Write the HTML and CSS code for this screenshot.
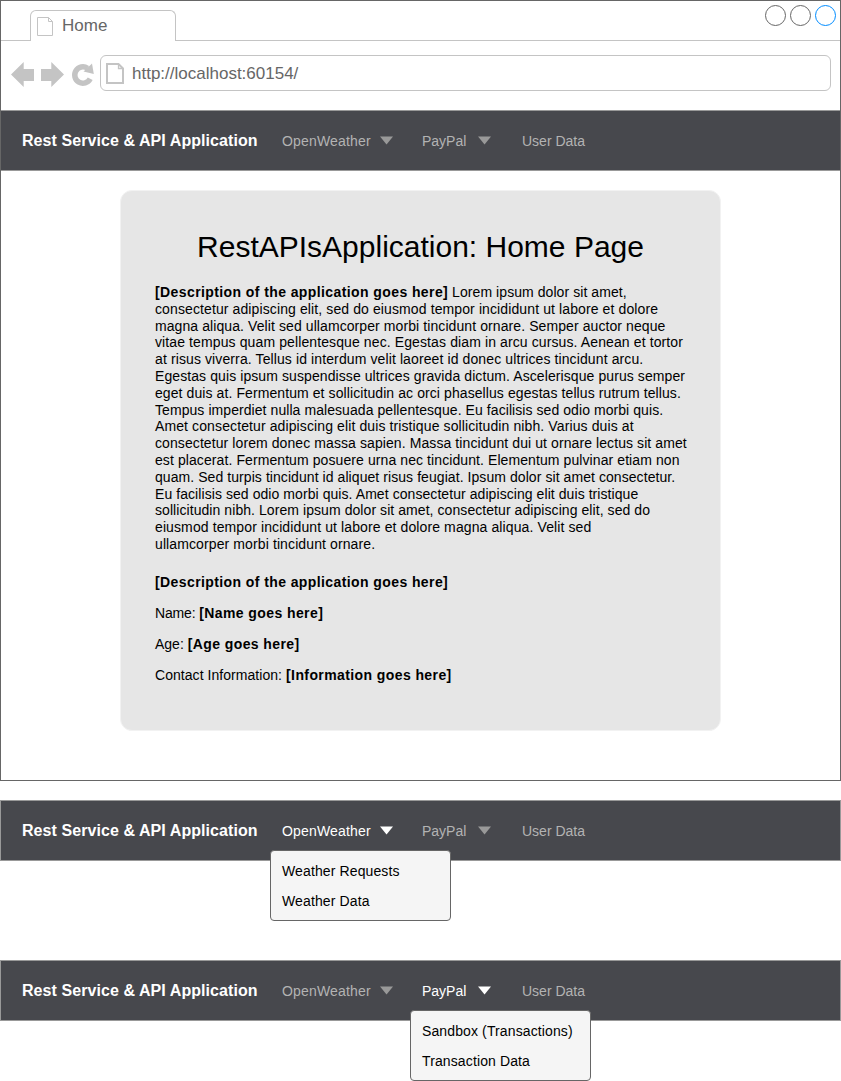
FILE: index.html
```html
<!DOCTYPE html>
<html lang="en">
<head>
<meta charset="utf-8">
<title>Home</title>
<link rel="stylesheet" href="styles.css">
</head>
<body>
<section class="browser">
  <div class="tabs">
    <div class="tabs-lead"></div>
    <div class="tab">
      <svg class="tab-icon" width="16" height="19" viewBox="0 0 16 19" fill="none" stroke="#c4c4c4"><path d="M.5.5H11.5L15.5 4.5V18.5H.5Z"/><path d="M11.5.5V4.5H15.5"/></svg>
      <span>Home</span>
    </div>
    <div class="tabs-rest">
      <i class="dot"></i><i class="dot"></i><i class="dot dot-blue"></i>
    </div>
  </div>
  <div class="toolbar">
    <svg class="controls" width="84" height="28" viewBox="0 0 84 28" fill="#c4c4c4">
      <path d="M0 13.5 12.700 1V8H23V20H12.700V26Z"/>
      <path d="M53 13.500 40.300 1V8H30V20H40.300V26Z"/>
      <path d="M76.500 7.200A8.200 8.200 0 1 0 79.200 17.800" fill="none" stroke="#c4c4c4" stroke-width="5.500"/>
      <path d="M81 2.500 82.800 13 72.500 10.500Z"/>
    </svg>
    <div class="address">
      <svg width="18" height="21" viewBox="0 0 18 21" fill="none" stroke="#c4c4c4"><path d="M1 1H12.500L17 5.500V20H1Z" stroke-width="2"/><path d="M12.500 1V5.500H17" stroke-width="1.300"/></svg>
      <span class="url">http://localhost:60154/</span>
    </div>
  </div>
  <nav class="navbar navbar-inset">
    <b class="brand">Rest Service &amp; API Application</b>
    <span class="item item-weather">OpenWeather<svg class="caret" width="13" height="9"><path d="M0 .5H13L6.500 8.500Z"/></svg></span>
    <span class="item item-paypal">PayPal<svg class="caret" width="13" height="9"><path d="M0 .5H13L6.500 8.500Z"/></svg></span>
    <span class="item">User Data</span>
  </nav>
  <main class="card">
    <h1>RestAPIsApplication: Home Page</h1>
    <p class="lorem">
      <span class="line snug"><b>[Description of the application goes here]</b> Lorem ipsum dolor sit amet,</span>
      <span class="line loose">consectetur adipiscing elit, sed do eiusmod tempor incididunt ut labore et dolore</span>
      <span class="line">magna aliqua. Velit sed ullamcorper morbi tincidunt ornare. Semper auctor neque</span>
      <span class="line loose">vitae tempus quam pellentesque nec. Egestas diam in arcu cursus. Aenean et tortor</span>
      <span class="line loose">at risus viverra. Tellus id interdum velit laoreet id donec ultrices tincidunt arcu.</span>
      <span class="line">Egestas quis ipsum suspendisse ultrices gravida dictum. Ascelerisque purus semper</span>
      <span class="line">eget duis at. Fermentum et sollicitudin ac orci phasellus egestas tellus rutrum tellus.</span>
      <span class="line snug">Tempus imperdiet nulla malesuada pellentesque. Eu facilisis sed odio morbi quis.</span>
      <span class="line loose">Amet consectetur adipiscing elit duis tristique sollicitudin nibh. Varius duis at</span>
      <span class="line">consectetur lorem donec massa sapien. Massa tincidunt dui ut ornare lectus sit amet</span>
      <span class="line">est placerat. Fermentum posuere urna nec tincidunt. Elementum pulvinar etiam non</span>
      <span class="line snug">quam. Sed turpis tincidunt id aliquet risus feugiat. Ipsum dolor sit amet consectetur.</span>
      <span class="line snug">Eu facilisis sed odio morbi quis. Amet consectetur adipiscing elit duis tristique</span>
      <span class="line snug">sollicitudin nibh. Lorem ipsum dolor sit amet, consectetur adipiscing elit, sed do</span>
      <span class="line loose">eiusmod tempor incididunt ut labore et dolore magna aliqua. Velit sed</span>
      <span class="line loose">ullamcorper morbi tincidunt ornare.</span>
    </p>
    <p><b>[Description of the application goes here]</b></p>
    <p><span class="name-label">Name: </span><b>[Name goes here]</b></p>
    <p>Age: <b>[Age goes here]</b></p>
    <p><span class="contact-label">Contact Information: </span><b>[Information goes here]</b></p>
  </main>
</section>

<nav class="navbar navbar-first">
  <b class="brand">Rest Service &amp; API Application</b>
  <span class="item item-weather active">OpenWeather<svg class="caret" width="13" height="9"><path d="M0 .5H13L6.500 8.500Z"/></svg></span>
  <span class="item item-paypal">PayPal<svg class="caret" width="13" height="9"><path d="M0 .5H13L6.500 8.500Z"/></svg></span>
  <span class="item">User Data</span>
  <div class="menu menu-weather"><div>Weather Requests</div><div>Weather Data</div></div>
</nav>

<nav class="navbar navbar-second">
  <b class="brand">Rest Service &amp; API Application</b>
  <span class="item item-weather">OpenWeather<svg class="caret" width="13" height="9"><path d="M0 .5H13L6.500 8.500Z"/></svg></span>
  <span class="item item-paypal active">PayPal<svg class="caret" width="13" height="9"><path d="M0 .5H13L6.500 8.500Z"/></svg></span>
  <span class="item">User Data</span>
  <div class="menu menu-paypal"><div>Sandbox (Transactions)</div><div>Transaction Data</div></div>
</nav>
</body>
</html>
```
FILE: styles.css
```css
* { box-sizing: border-box; }
body {
  margin: 0;
  width: 841px;
  height: 1081px;
  overflow: hidden;
  background: #fff;
  color: #000;
  font: 14px/16.8px "Liberation Sans", Arial, sans-serif;
}
svg { display: block; flex: none; }
.browser { height: 781px; border: 1px solid #666; }

.tabs { display: flex; height: 40px; }
.tabs-lead { width: 29px; border-bottom: 1px solid #c4c4c4; }
.tab {
  display: flex;
  gap: 9px;
  width: 146px;
  margin-top: 9px;
  padding: 6px 0 0 6px;
  border: 1px solid #c4c4c4;
  border-bottom: 0;
  border-radius: 6px 6px 0 0;
  color: #666;
  font-size: 17px;
  line-height: 18px;
}
.tabs-rest {
  flex: 1;
  display: flex;
  justify-content: flex-end;
  gap: 4px;
  padding: 4px 4px 0 0;
  border-bottom: 1px solid #c4c4c4;
}
.dot { width: 21px; height: 21px; border: 1px solid #666; border-radius: 50%; }
.dot-blue { border-color: #008cff; }

.toolbar { display: flex; height: 69px; padding: 14px 9px 0 10px; }
.controls { margin-top: 6px; }
.address {
  flex: 1;
  display: flex;
  align-items: center;
  gap: 8px;
  height: 36px;
  margin-left: 5px;
  padding-left: 5px;
  border: 1px solid #c4c4c4;
  border-radius: 6px;
  color: #666;
  font-size: 17px;
}
.url { padding-top: 2px; }

.navbar {
  position: relative;
  display: grid;
  grid-template-columns: 260px 140px 100px auto;
  align-items: center;
  height: 61px;
  padding-left: 21px;
  border: 1px solid #999;
  background: #47484d;
  color: #b3b3b3;
}
.navbar-inset { border-width: 1px 0; }
.navbar-first { margin-top: 19px; }
.navbar-second { margin-top: 99px; }
.brand { padding-top: 2px; color: #fff; font-size: 16px; letter-spacing: .07px; }
.item { display: flex; justify-content: space-between; align-items: center; padding-top: 1px; }
.item-weather { width: 111px; letter-spacing: .17px; }
.item-paypal { width: 69px; }
.caret { fill: #999; }
.active { color: #fff; }
.active .caret { fill: #fff; }

.menu {
  position: absolute;
  top: 49px;
  width: 181px;
  height: 71px;
  padding: 5px 11px;
  border: 1px solid #666;
  border-radius: 4px;
  background: #f5f5f5;
  color: #000;
  line-height: 30px;
  letter-spacing: .12px;
}
.menu-weather { left: 269px; }
.menu-paypal { left: 409px; }

.card {
  width: 601px;
  height: 541px;
  margin: 19px 0 0 119px;
  padding: 38px 34px 0 34px;
  border: 1px solid #f2f2f2;
  border-radius: 12px;
  background: #e6e6e6;
}
h1 { margin: 0; font-size: 30px; font-weight: 400; line-height: 36px; text-align: center; }
p { margin: 0 0 14.2px; white-space: nowrap; }
p b { letter-spacing: .405px; }
.lorem { margin: 19px 0 21px; }
.line { display: block; letter-spacing: .088px; }
.loose { letter-spacing: .11px; }
.snug { letter-spacing: .068px; }
.name-label { letter-spacing: -.15px; }
.contact-label { letter-spacing: .05px; }
```
